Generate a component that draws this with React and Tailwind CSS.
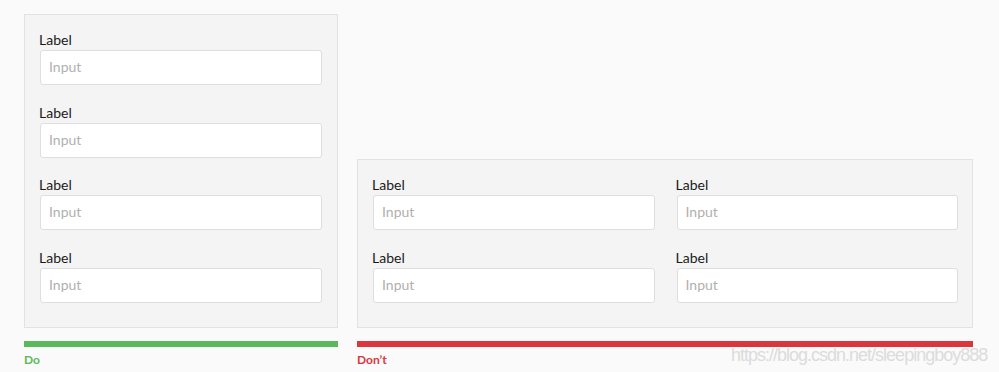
import React from "react";

function Field() {
  return (
    <div className="flex flex-col">
      <label className="-ml-[1px] mb-[2px] text-[14px] leading-[17px] text-[#1a1a1a]">Label</label>
      <input
        type="text"
        placeholder="Input"
        className="h-[35px] w-full rounded-[3px] border border-[#dedede] bg-white px-[8px] pb-[2px] text-[14px] text-[#333] placeholder:text-[#b0b0b0] outline-none"
      />
    </div>
  );
}

export default function App() {
  return (
    <div
      className="relative h-[372px] w-[999px] overflow-hidden bg-[#fafafa] pl-[24px] pt-[14px]"
      style={{ fontFamily: "Lato, 'Open Sans', sans-serif" }}
    >
      <div className="flex items-end gap-[19px]">
        {/* DO */}
        <div className="flex w-[314px] flex-col">
          <div className="flex flex-col gap-[18.5px] border border-[#e2e2e2] bg-[#f4f4f4] pb-[24px] pl-[15px] pr-[15px] pt-[16px]">
            <Field />
            <Field />
            <Field />
            <Field />
          </div>
          <div className="mt-[13px] h-[6px] bg-[#5cb85c]" />
          <div className="mt-[5px] text-[12px] font-bold leading-[15px] text-[#5cb85c]">Do</div>
        </div>

        {/* DON'T */}
        <div className="flex w-[616px] flex-col">
          <div className="grid grid-cols-2 gap-x-[22px] gap-y-[18.5px] border border-[#e2e2e2] bg-[#f4f4f4] pb-[24px] pl-[15px] pr-[14px] pt-[16px]">
            <Field />
            <Field />
            <Field />
            <Field />
          </div>
          <div className="mt-[13px] h-[6px] bg-[#d9363e]" />
          <div className="mt-[5px] text-[12px] font-bold leading-[15px] text-[#d9363e]">Don’t</div>
        </div>
      </div>

      {/* watermark */}
      <div
        className="absolute left-[731px] top-[345px] whitespace-nowrap text-[18px] leading-[20px] tracking-[-1px] text-[#dcdcdc]"
        style={{ fontFamily: "'Liberation Sans', Arial, sans-serif" }}
      >
        https://blog.csdn.net/sleepingboy888
      </div>
    </div>
  );
}
